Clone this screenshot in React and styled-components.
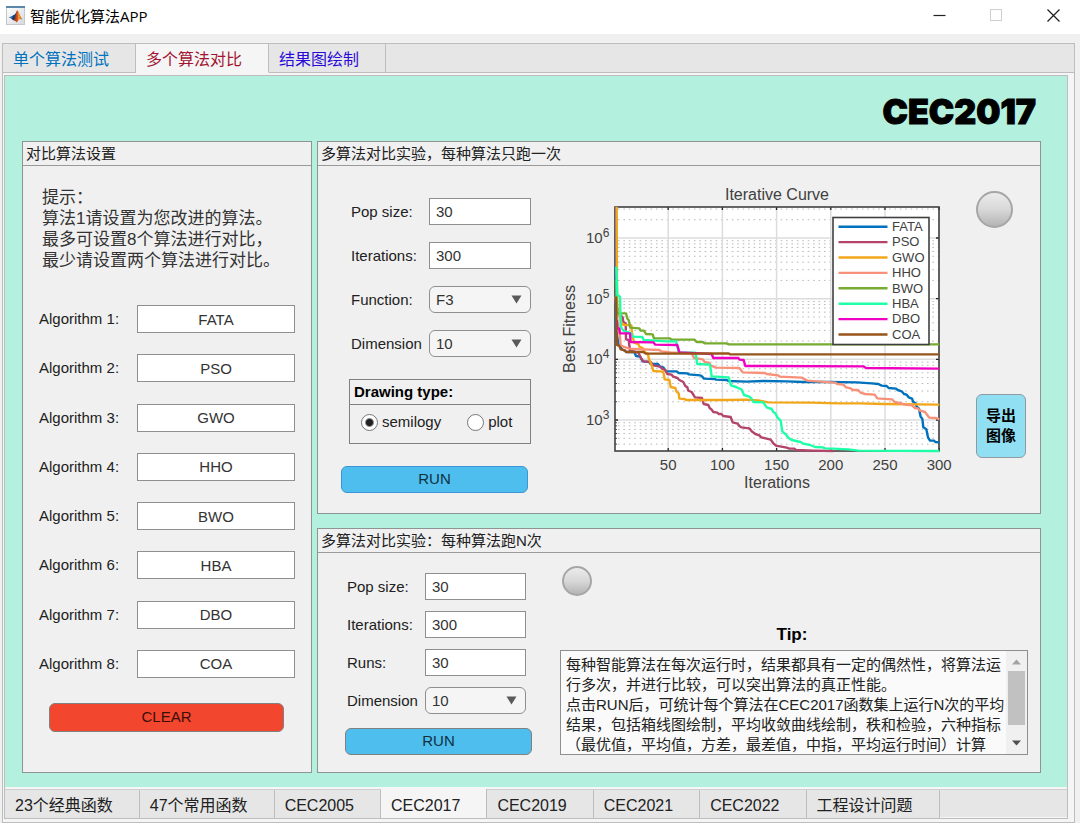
import React from "react";
import styled, { createGlobalStyle } from "styled-components";

const GlobalStyle = createGlobalStyle`
  * {
    box-sizing: border-box;
  }
  body {
    margin: 0;
    background: #f0f0f0;
    color: #212121;
    font-family: "Liberation Sans", "Noto Sans CJK SC", sans-serif;
    font-size: 15px;
    line-height: 20px;
  }
  button, input, select, textarea {
    margin: 0;
    font: inherit;
    color: inherit;
  }
`;

const TitleBar = styled.header`
  display: flex;
  align-items: center;
  gap: 5px;
  height: 34px;
  padding: 0 7px 3px 6px;
  background: white;
`;

const AppTitle = styled.h1`
  flex: 1;
  margin: 0;
  font-family: "Open Sans", "Noto Sans CJK SC", sans-serif;
  font-size: 15px;
  font-weight: 400;
  color: black;
`;

const WindowButtons = styled.div`
  display: flex;
  gap: 17px;
`;

const WindowButton = styled.button`
  display: flex;
  align-items: center;
  justify-content: center;
  width: 40px;
  height: 28px;
  padding: 0;
  border: none;
  background: none;
  color: ${(props) => (props.disabled ? "#cfcfcf" : "#222")};
`;

const Frame = styled.main`
  margin: 9px 5px 0 2px;
  border: 1px solid #bdbdbd;
  background: #f5f5f5;
`;

const TabStrip = styled.nav`
  display: flex;
  height: 29px;
  margin-top: ${(props) => (props.$bottom ? 2 : 0)}px;
  background: #e6e6e6;
  border-top: ${(props) => (props.$bottom ? "1px solid #cfcfcf" : "none")};
  border-bottom: 1px solid ${(props) => (props.$bottom ? "#f5f5f5" : "#bdbdbd")};
`;

const Tab = styled.button`
  height: 29px;
  padding: 3px 26px 0 10px;
  border: none;
  border-right: 1px solid #bdbdbd;
  border-bottom: 1px solid ${(props) => (props.$active ? "#f5f5f5" : "#bdbdbd")};
  background: ${(props) => (props.$active ? "#f5f5f5" : "#e6e6e6")};
  color: ${(props) => props.$color || "#212121"};
  font-size: 16px;
  white-space: nowrap;
  cursor: pointer;
`;

const BottomTab = styled(Tab)`
  height: ${(props) => (props.$active ? 29 : 28)}px;
  margin-top: ${(props) => (props.$active ? -1 : 0)}px;
  padding-top: ${(props) => (props.$active ? 5 : 4)}px;
  border-bottom: none;
`;

const Page = styled.section`
  margin: 2px 6px 3px 1px;
  border: 1px solid #bdbdbd;
`;

const Board = styled.div`
  padding: 16px 26px 14px 17px;
  background: #b4f0de;
`;

const BoardTitle = styled.h2`
  margin: 0 5px 9px 0;
  font-family: Inter, sans-serif;
  font-size: 34px;
  line-height: 40px;
  font-weight: 900;
  text-align: right;
  color: black;
  -webkit-text-stroke: 1px black;
`;

const Panels = styled.div`
  display: grid;
  grid-template-columns: 290px 1fr;
  gap: 5px;
`;

const Column = styled.div`
  display: flex;
  flex-direction: column;
  gap: 14px;
`;

const Panel = styled.section`
  border: 1px solid #8e9492;
  background: #f0f0f0;
`;

const PanelTitle = styled.h3`
  margin: 0;
  padding: 2px 3px 1px;
  border-bottom: 1px solid #9a9a9a;
  font-size: 15px;
  font-weight: 400;
`;

const SetupBody = styled.div`
  padding: 21px 16px 40px;
`;

const Hint = styled.p`
  margin: 0 0 34px 3px;
  font-size: 17px;
  line-height: 21px;
  color: #333;
`;

const AlgorithmList = styled.div`
  display: flex;
  flex-direction: column;
  justify-content: space-between;
  min-height: 373px;
  margin-bottom: 25px;
`;

const Row = styled.div`
  display: grid;
  grid-template-columns: ${(props) => props.$label}px 1fr;
  align-items: center;
`;

const Label = styled.label`
  white-space: nowrap;
`;

const TextInput = styled.input`
  width: 100%;
  height: ${(props) => (props.$center ? 28 : 27)}px;
  padding: 0 6px;
  border: 1px solid #8f8f8f;
  background: white;
  color: #333;
  text-align: ${(props) => (props.$center ? "center" : "left")};
`;

const SelectBox = styled.div`
  position: relative;
  height: 27px;
`;

const Select = styled.select`
  appearance: none;
  width: 100%;
  height: 27px;
  padding: 0 6px;
  border: 1px solid #8f8f8f;
  border-radius: 6px;
  background: #f5f5f5;
  color: #333;
`;

const SelectArrow = styled.svg`
  position: absolute;
  right: 9px;
  top: 9px;
  pointer-events: none;
`;

const ActionButton = styled.button`
  display: block;
  height: ${(props) => (props.$clear ? 29 : 27)}px;
  width: ${(props) => (props.$clear ? "auto" : "187px")};
  padding: 0 0 2px;
  border: 1px solid ${(props) => props.$border || "#808080"};
  border-radius: 6px;
  background: ${(props) => (props.$clear ? "#f2462e" : "#4dbeee")};
  color: ${(props) => (props.$clear ? "#3a0f08" : "#12303f")};
  cursor: pointer;
`;

const ClearRow = styled.div`
  display: grid;
  padding: 0 11px 0 10px;
`;

const OnceBody = styled.div`
  display: flex;
  padding: 0 14px 20px 23px;
`;

const OnceForm = styled.form`
  width: 190px;
  padding-top: 32px;
`;

const Fields = styled.div`
  display: flex;
  flex-direction: column;
  gap: ${(props) => props.$gap}px;
  padding-left: ${(props) => props.$indent}px;
  padding-right: ${(props) => props.$end || 0}px;
`;

const RadioGroup = styled.div`
  height: 65px;
  margin: 22px 0 22px 8px;
  border: 1px solid #808080;
`;

const RadioTitle = styled.div`
  padding: 2px 4px;
  border-bottom: 1px solid #808080;
  font-weight: 700;
  color: black;
`;

const Radios = styled.div`
  display: flex;
  gap: 26px;
  padding: 7px 11px;
`;

const RadioLabel = styled.label`
  display: flex;
  align-items: center;
  gap: 4px;
`;

const Radio = styled.input`
  appearance: none;
  width: 17px;
  height: 17px;
  border: 1px solid #777;
  border-radius: 50%;
  background: white;
  &:checked {
    background: radial-gradient(circle, #212121 0 3px, white 5px);
  }
`;

const ChartBox = styled.div`
  flex: 1;
  padding-top: 16px;
  margin-left: 25px;
  margin-right: 20px;
`;

const ChartSvg = styled.svg`
  display: block;
  width: 100%;
  height: auto;
  font-size: 15px;
  fill: #404040;
`;

const Side = styled.div`
  display: flex;
  flex-direction: column;
  gap: 166px;
  width: 50px;
  padding-top: 25px;
`;

const Lamp = styled.div`
  width: ${(props) => props.$size}px;
  height: ${(props) => props.$size}px;
  flex-shrink: 0;
  border: 2px solid #a6a6a6;
  border-radius: 50%;
  background: linear-gradient(#ebebeb, #d8d8d8 50%, #b4b4b4);
`;

const ExportButton = styled.button`
  width: 50px;
  height: 64px;
  padding: 0 8px;
  border: 1px solid #8f9ba0;
  border-radius: 6px;
  background: #91dff3;
  color: black;
  font-weight: 700;
  cursor: pointer;
`;

const ManyBody = styled.div`
  display: flex;
  gap: 28px;
  padding: 0 12px 17px 27px;
`;

const ManyForm = styled.form`
  width: 187px;
  padding-top: 20px;
`;

const Spacer = styled.div`
  height: 14px;
`;

const TipColumn = styled.div`
  flex: 1;
  min-width: 0;
  padding-top: 13px;
`;

const LampRow = styled.div`
  padding-left: 2px;
`;

const TipTitle = styled.label`
  display: block;
  margin: 29px 0 5px;
  padding-right: 4px;
  text-align: center;
  font-size: 17px;
  font-weight: 700;
  color: black;
`;

const TipBox = styled.div`
  display: flex;
  height: 105px;
  border: 1px solid #8f8f8f;
  background: #fafafa;
`;

const TipText = styled.textarea`
  flex: 1;
  min-width: 0;
  padding: 4px 0 0 5px;
  border: none;
  background: none;
  resize: none;
  outline: none;
  overflow-y: auto;
  scrollbar-width: none;
`;

const ScrollBar = styled.div`
  display: flex;
  flex-direction: column;
  align-items: center;
  width: 21px;
  background: #f0f0f0;
`;

const ScrollThumb = styled.div`
  width: 17px;
  height: 54px;
  margin-bottom: auto;
  background: #c1c1c1;
`;

const topTabs = [
  { name: "单个算法测试", color: "#0072bd" },
  { name: "多个算法对比", color: "#a2142f", active: true },
  { name: "结果图绘制", color: "#2a0bd6" },
];

const bottomTabs = [
  "23个经典函数",
  "47个常用函数",
  "CEC2005",
  "CEC2017",
  "CEC2019",
  "CEC2021",
  "CEC2022",
  "工程设计问题",
];

const tipText = `每种智能算法在每次运行时，结果都具有一定的偶然性，将算法运行多次，并进行比较，可以突出算法的真正性能。
点击RUN后，可统计每个算法在CEC2017函数集上运行N次的平均结果，包括箱线图绘制，平均收敛曲线绘制，秩和检验，六种指标（最优值，平均值，方差，最差值，中指，平均运行时间）计算`;

// points are in thirds of a chart unit
const curves = [
  {
    name: "FATA",
    color: "#0072bd",
    points:
      "47,82 47,440 55,490 66,508 80,516 103,516 108,528 120,530 128,544 148,546 152,552 174,552 180,560 190,562 198,574 230,574 236,579 262,580 266,583 300,586 305,588 312,596 345,597 348,599 380,600 385,603 440,605 490,603 560,604 610,606 690,606 770,607 815,610 835,612 845,617 860,618 866,624 888,626 893,630 905,634 912,642 920,644 926,652 936,656 940,666 947,670 950,680 957,686 962,710 967,716 970,742 979,748 984,772 990,782 1002,782 1006,786 1018,787",
  },
  {
    name: "PSO",
    color: "#b3446c",
    points:
      "48,82 50,380 60,405 68,412 70,426 77,430 78,478 86,480 90,512 115,518 122,532 130,544 152,546 160,556 180,560 186,566 196,570 202,582 215,584 220,590 232,594 238,600 250,606 256,618 262,622 265,632 275,636 285,652 306,654 311,672 325,675 329,684 334,688 340,696 352,698 356,702 364,702 370,708 392,711 398,727 413,731 418,738 424,742 448,745 455,754 466,762 478,766 484,772 512,779 520,790 528,797 560,803 568,806 583,806 588,810 640,812 700,813",
  },
  {
    name: "GWO",
    color: "#f2a71b",
    points:
      "50,80 51,350 53,395 60,410 66,434 94,436 96,458 102,488 115,492 118,500 128,504 134,516 144,522 146,534 155,556 160,573 190,575 194,598 208,600 212,621 226,624 229,634 236,640 238,656 254,657 258,660 380,660 440,659 475,661 490,664 505,667 630,668 720,670 780,670 850,672 1018,674",
  },
  {
    name: "HHO",
    color: "#f7917a",
    points:
      "47,350 52,420 60,470 62,495 70,500 88,506 130,508 178,510 184,514 212,517 275,520 282,534 308,538 314,546 328,549 332,556 348,563 418,564 428,577 495,579 500,582 534,586 540,590 605,593 622,602 650,604 705,608 712,612 730,614 738,622 752,625 758,630 774,630 782,638 795,642 824,644 832,655 876,658 884,666 904,670 914,674 936,676 945,684 955,686 960,692 975,696 988,713 1008,714 1018,718",
  },
  {
    name: "BWO",
    color: "#77ac30",
    points:
      "48,300 50,400 78,400 82,416 86,420 91,443 118,445 122,452 132,452 138,462 158,463 162,475 210,475 214,479 284,479 290,486 308,486 314,490 380,490 386,493 1018,493",
  },
  {
    name: "HBA",
    color: "#1effa8",
    points:
      "49,260 52,345 60,350 62,440 70,452 94,460 98,470 127,471 131,480 200,484 228,484 236,517 286,518 292,552 330,554 335,589 386,592 393,616 408,621 425,629 432,645 448,650 454,655 460,666 490,667 500,682 515,687 520,696 526,700 532,712 542,722 547,754 558,764 566,774 575,780 602,786 610,791 630,795 645,801 668,802 676,805 700,806 745,808 775,812 1018,813",
  },
  {
    name: "DBO",
    color: "#f000c0",
    points:
      "50,420 52,445 58,446 60,460 90,460 92,486 160,487 166,494 232,495 238,517 300,520 335,522 340,534 415,534 419,539 431,540 436,558 790,559 798,564 1018,566",
  },
  {
    name: "COA",
    color: "#98551a",
    points:
      "48,350 50,495 58,498 62,508 75,511 78,516 130,516 138,521 385,520 390,523 1018,523",
  },
];

const PLOT = { left: 59, right: 383, top: 25, bottom: 269 };
const xTicks = [50, 100, 150, 200, 250, 300];
const yTicks = [6, 5, 4, 3];
const xAt = (iteration) => 58 + iteration * 1.084;
const yAt = (exponent) => 420 - (exponent * 182) / 3;

const minorLines = [];
for (let exp = 2; exp < 7; exp++) {
  for (let n = 2; n < 10; n++) {
    const y = yAt(exp + Math.log10(n));
    if (y > PLOT.top + 2 && y < PLOT.bottom - 1) minorLines.push(y);
  }
}

const Chart = () => (
  <ChartBox>
    <ChartSvg viewBox="0 0 400 310" role="img" aria-label="Iterative Curve">
      <rect
        x={PLOT.left}
        y={PLOT.top}
        width={PLOT.right - PLOT.left}
        height={PLOT.bottom - PLOT.top}
        fill="white"
      />
      {minorLines.map((y) => (
        <g key={y}>
          <line
            x1={PLOT.left + 3}
            x2={PLOT.right}
            y1={y}
            y2={y}
            stroke="#b8b8b8"
            strokeDasharray="1.6 3.82"
          />
          <line x1={PLOT.left} x2={PLOT.left + 2} y1={y} y2={y} stroke="#404040" />
        </g>
      ))}
      {xTicks.map((tick) => (
        <g key={tick}>
          <line x1={xAt(tick)} x2={xAt(tick)} y1={PLOT.top} y2={PLOT.bottom} stroke="#dcdcdc" strokeWidth="1.5" />
          <path
            d={`M${xAt(tick)} ${PLOT.top}v3M${xAt(tick)} ${PLOT.bottom}v-3`}
            stroke="#262626"
            strokeWidth="1.3"
          />
          <text x={xAt(tick)} y="288" textAnchor="middle">
            {tick}
          </text>
        </g>
      ))}
      {yTicks.map((tick) => (
        <g key={tick}>
          <line x1={PLOT.left} x2={PLOT.right} y1={yAt(tick)} y2={yAt(tick)} stroke="#dcdcdc" strokeWidth="1.5" />
          <path
            d={`M${PLOT.left} ${yAt(tick)}h3M${PLOT.right} ${yAt(tick)}h-3`}
            stroke="#262626"
            strokeWidth="1.3"
          />
          <text x="30" y={yAt(tick) + 5}>
            10
            <tspan dy="-6" fontSize="12">
              {tick}
            </tspan>
          </text>
        </g>
      ))}
      <rect
        x={PLOT.left}
        y={PLOT.top}
        width={PLOT.right - PLOT.left}
        height={PLOT.bottom - PLOT.top}
        fill="none"
        stroke="#404040"
        strokeWidth="1.6"
      />
      <g transform="translate(44 -2) scale(0.33333)">
        {curves.map((curve) => (
          <polyline
            key={curve.name}
            points={curve.points}
            fill="none"
            stroke={curve.color}
            strokeWidth="7.2"
            strokeLinejoin="round"
          />
        ))}
      </g>
      <rect x="277" y="35.5" width="96" height="127" fill="white" stroke="#404040" strokeWidth="1.6" />
      {curves.map((curve, i) => (
        <g key={curve.name}>
          <line
            x1="282.5"
            x2="331.5"
            y1={44.7 + i * 15.4}
            y2={44.7 + i * 15.4}
            stroke={curve.color}
            strokeWidth="2.4"
          />
          <text x="336" y={49 + i * 15.4} fontSize="13">
            {curve.name}
          </text>
        </g>
      ))}
      <text x="221" y="18" textAnchor="middle" fontSize="16">
        Iterative Curve
      </text>
      <text x="221" y="306" textAnchor="middle" fontSize="16">
        Iterations
      </text>
      <text transform="translate(19 147) rotate(-90)" textAnchor="middle" fontSize="16">
        Best Fitness
      </text>
    </ChartSvg>
  </ChartBox>
);

const MatlabIcon = () => (
  <svg width="19" height="19" viewBox="0 0 19 19" aria-hidden="true">
    <defs>
      <linearGradient id="iconPaper" x1="0" y1="0" x2="1" y2="1">
        <stop offset="0" stopColor="#ffffff" />
        <stop offset="1" stopColor="#d5d8dc" />
      </linearGradient>
      <linearGradient id="iconPeak" x1="0" y1="0" x2="1" y2="0">
        <stop offset="0" stopColor="#7a1e14" />
        <stop offset="0.45" stopColor="#e0561b" />
        <stop offset="0.6" stopColor="#f7a636" />
        <stop offset="1" stopColor="#b93a18" />
      </linearGradient>
    </defs>
    <rect x="0.5" y="0.5" width="18" height="18" fill="url(#iconPaper)" stroke="#c3c8ce" />
    <rect width="19" height="2" fill="#5c87ad" />
    <path d="M2.6 11.4L7 9.4l2.4-1.2 1.8-3L9 13.6 7.2 14.2 5.4 12.6z" fill="#3a7cba" />
    <path d="M7 9.4l2-1 2.2-3.8-1.8 8-2.2 1.600-1.8-1.600z" fill="#1b3f6b" />
    <path d="M11.3 4.2c1.5.6 2.6 5.8 5.2 9.4-1.7-.9-2.8-.7-3.8.4l-2.1 2.4c-.7-1.4-1.7-2-3.1-2 2.1-1.8 2.6-9.2 3.8-10.2z" fill="url(#iconPeak)" />
  </svg>
);

const DropDown = ({ id, value }) => (
  <SelectBox>
    <Select id={id} defaultValue={value}>
      <option>{value}</option>
    </Select>
    <SelectArrow width="11" height="9" viewBox="0 0 11 9" aria-hidden="true">
      <path d="M0.5 0.5h10L5.5 8.5z" fill="#5a5a5a" />
    </SelectArrow>
  </SelectBox>
);

const Field = ({ id, label, value, select, labelWidth = 78 }) => (
  <Row $label={labelWidth}>
    <Label htmlFor={id}>{label}</Label>
    {select ? <DropDown id={id} value={value} /> : <TextInput id={id} defaultValue={value} />}
  </Row>
);

const App = () => {
  return (
    <>
      <GlobalStyle />
      <TitleBar>
        <MatlabIcon />
        <AppTitle>智能优化算法APP</AppTitle>
        <WindowButtons>
          <WindowButton aria-label="Minimize">
            <svg width="13" height="13" fill="none" stroke="currentColor">
              <path d="M0.5 6.5h12" strokeWidth="1.2" />
            </svg>
          </WindowButton>
          <WindowButton aria-label="Maximize" disabled>
            <svg width="13" height="13" fill="none" stroke="currentColor">
              <rect x="0.5" y="0.5" width="11" height="11" />
            </svg>
          </WindowButton>
          <WindowButton aria-label="Close">
            <svg width="13" height="13" fill="none" stroke="currentColor">
              <path d="M0.5 0.5l12 12M12.5 0.5l-12 12" strokeWidth="1.3" />
            </svg>
          </WindowButton>
        </WindowButtons>
      </TitleBar>
      <Frame>
        <TabStrip>
          {topTabs.map((tab) => (
            <Tab key={tab.name} $color={tab.color} $active={tab.active}>
              {tab.name}
            </Tab>
          ))}
        </TabStrip>
        <Page>
          <Board>
            <BoardTitle>CEC2017</BoardTitle>
            <Panels>
              <Panel>
                <PanelTitle>对比算法设置</PanelTitle>
                <SetupBody>
                  <Hint>
                    提示：
                    <br />
                    算法1请设置为您改进的算法。
                    <br />
                    最多可设置8个算法进行对比，
                    <br />
                    最少请设置两个算法进行对比。
                  </Hint>
                  <AlgorithmList>
                    {curves.map((curve, i) => (
                      <Row key={curve.name} $label={98}>
                        <Label htmlFor={`algorithm${i}`}>Algorithm {i + 1}:</Label>
                        <TextInput id={`algorithm${i}`} defaultValue={curve.name} $center />
                      </Row>
                    ))}
                  </AlgorithmList>
                  <ClearRow>
                    <ActionButton $clear>CLEAR</ActionButton>
                  </ClearRow>
                </SetupBody>
              </Panel>
              <Column>
                <Panel>
                  <PanelTitle>多算法对比实验，每种算法只跑一次</PanelTitle>
                  <OnceBody>
                    <OnceForm>
                      <Fields $gap={17} $indent={10}>
                        <Field id="oncePop" label="Pop size:" value="30" />
                        <Field id="onceIterations" label="Iterations:" value="300" />
                        <Field id="onceFunction" label="Function:" value="F3" select />
                        <Field id="onceDimension" label="Dimension" value="10" select />
                      </Fields>
                      <RadioGroup role="radiogroup" aria-labelledby="drawingType">
                        <RadioTitle id="drawingType">Drawing type:</RadioTitle>
                        <Radios>
                          <RadioLabel>
                            <Radio type="radio" name="drawing" defaultChecked />
                            semilogy
                          </RadioLabel>
                          <RadioLabel>
                            <Radio type="radio" name="drawing" />
                            plot
                          </RadioLabel>
                        </Radios>
                      </RadioGroup>
                      <ActionButton type="button" $border="#3d94d6">
                        RUN
                      </ActionButton>
                    </OnceForm>
                    <Chart />
                    <Side>
                      <Lamp $size={37} />
                      <ExportButton>导出图像</ExportButton>
                    </Side>
                  </OnceBody>
                </Panel>
                <Panel>
                  <PanelTitle>多算法对比实验：每种算法跑N次</PanelTitle>
                  <ManyBody>
                    <ManyForm>
                      <Fields $gap={11} $indent={2} $end={6}>
                        <Field id="manyPop" label="Pop size:" value="30" />
                        <Field id="manyIterations" label="Iterations:" value="300" />
                        <Field id="manyRuns" label="Runs:" value="30" />
                        <Field id="manyDimension" label="Dimension" value="10" select />
                      </Fields>
                      <Spacer />
                      <ActionButton type="button">RUN</ActionButton>
                    </ManyForm>
                    <TipColumn>
                      <LampRow>
                        <Lamp $size={30} />
                      </LampRow>
                      <TipTitle htmlFor="tip">Tip:</TipTitle>
                      <TipBox>
                        <TipText id="tip" readOnly defaultValue={tipText} />
                        <ScrollBar aria-hidden="true">
                          <svg width="17" height="20">
                            <path d="M4 13.5l4.5-5 4.5 5z" fill="#a3a3a3" />
                          </svg>
                          <ScrollThumb />
                          <svg width="17" height="20">
                            <path d="M4 6.5h9l-4.5 5z" fill="#505050" />
                          </svg>
                        </ScrollBar>
                      </TipBox>
                    </TipColumn>
                  </ManyBody>
                </Panel>
              </Column>
            </Panels>
          </Board>
          <TabStrip $bottom>
            {bottomTabs.map((name) => (
              <BottomTab key={name} $active={name === "CEC2017"}>
                {name}
              </BottomTab>
            ))}
          </TabStrip>
        </Page>
      </Frame>
    </>
  );
};

export default App;
